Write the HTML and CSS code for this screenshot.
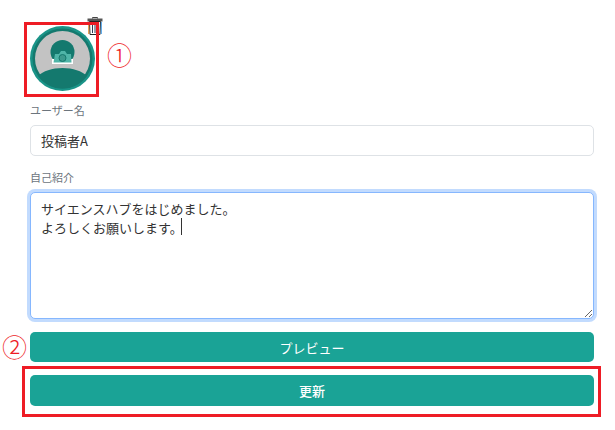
FILE: index.html
```html
<!DOCTYPE html>
<html lang="ja">
<head>
    <meta charset="UTF-8">
    <title>プロフィール編集</title>
    <link rel="stylesheet" href="styles.css">
</head>
<body>
    <form class="profile-form">
        <div class="avatar-wrap">
            <svg class="avatar" viewBox="0 0 65 65" width="65" height="65">
                <circle cx="32.5" cy="32.5" r="32.5" fill="#1a9488"/>
                <circle cx="32.5" cy="32.5" r="30" fill="#14796e"/>
                <circle cx="32.5" cy="32.5" r="27.500" fill="#c3c3c3"/>
                <path d="M8 50C13 45 22 42 32.500 42S52 45 57 50A30 30 0 0 1 32.500 62.500 30 30 0 0 1 8 50Z" fill="#14796e"/>
                <circle cx="32.5" cy="26" r="12" fill="#14796e"/>
                <path d="M22 33H43V38H22Z" fill="#fff"/>
                <path d="M23.500 36.500L25 28H29L31 25H35L37 28H41L41.500 36.500Z" fill="#4fb5a8"/>
                <circle cx="32.500" cy="32" r="3.500" fill="#3d9a8e" stroke="#14796e"/>
            </svg>
            <svg class="trash-icon" viewBox="0 0 16 18" width="16" height="18">
                <path d="M5.500 1.500V0.500H10.500V1.500" fill="none" stroke="#444"/>
                <path d="M0.500 1.500H15.500V4.500H0.500Z" fill="#555"/>
                <path d="M2.500 4.500H13.500L13 17.500H3Z" fill="#fff" stroke="#222"/>
                <path d="M1.700 5V17" stroke="#e8912d"/>
                <path d="M14.300 5V17" stroke="#3f9be8"/>
                <path d="M5.500 6V16M8 6V16M10.500 6V16" stroke="#2b3a55"/>
            </svg>
            <span class="mark mark-one">①</span>
            <div class="red-box red-box-avatar"></div>
        </div>

        <label class="field-label name-label" for="name">ユーザー名</label>
        <input class="text-input" id="name" type="text" value="投稿者A">

        <label class="field-label bio-label" for="bio">自己紹介</label>
        <div class="bio-wrap">
            <textarea class="bio-input" id="bio">サイエンスハブをはじめました。
よろしくお願いします。</textarea>
            <span class="caret"></span>
        </div>

        <div class="preview-row">
            <span class="mark mark-two">②</span>
            <button class="btn btn-preview" type="button">プレビュー</button>
        </div>
        <div class="submit-row">
            <button class="btn btn-submit" type="button">更新</button>
            <div class="red-box red-box-submit"></div>
        </div>
    </form>
</body>
</html>
```

FILE: styles.css
```css
body {
    margin: 0;
    background: #fff;
    font-family: "Noto Sans CJK JP", "Noto Sans", sans-serif;
    color: #333;
}
.profile-form {
    display: flex;
    flex-direction: column;
    padding: 26px 21px 24px 30px;
}
.avatar-wrap {
    position: relative;
    width: 65px;
    height: 65px;
}
.avatar {
    display: block;
}
.trash-icon {
    position: absolute;
    left: 57px;
    top: -9px;
}
.mark {
    position: absolute;
    color: #ee1c25;
    font-size: 25px;
    font-weight: 300;
    line-height: 26px;
}
.mark-one {
    left: 77px;
    top: 15px;
}
.mark-two {
    left: -28px;
    top: 1px;
}
.red-box {
    position: absolute;
    border: 3px solid #ee1c25;
    box-sizing: border-box;
    pointer-events: none;
}
.red-box-avatar {
    left: -6px;
    top: -4px;
    width: 75px;
    height: 75px;
}
.red-box-submit {
    left: -8px;
    top: -9px;
    width: 579px;
    height: 51px;
}
.field-label {
    font-size: 11px;
    line-height: 18px;
    color: #6c757d;
}
.name-label {
    margin-top: 10px;
    margin-bottom: 6px;
}
.bio-label {
    margin-top: 12px;
    margin-bottom: 6px;
}
.text-input {
    height: 31px;
    box-sizing: border-box;
    padding: 0 10px;
    border: 1px solid #dee2e6;
    border-radius: 5px;
    font: inherit;
    font-size: 13px;
    color: #333;
}
.bio-wrap {
    position: relative;
    height: 127px;
}
.bio-input {
    display: block;
    width: 100%;
    height: 100%;
    box-sizing: border-box;
    padding: 6px 10px;
    border: 1px solid #86b7fe;
    border-radius: 5px;
    box-shadow: 0 0 0 3px #c2dbfe;
    outline: none;
    font: inherit;
    font-size: 13px;
    line-height: 19px;
    color: #333;
}
.caret {
    position: absolute;
    left: 151px;
    top: 26px;
    width: 1px;
    height: 17px;
    background: #333;
}
.preview-row {
    position: relative;
    margin-top: 13px;
}
.submit-row {
    position: relative;
    margin-top: 13px;
}
.btn {
    display: block;
    width: 100%;
    border: none;
    border-radius: 5px;
    background: #1aa396;
    color: #fff;
    font: inherit;
}
.btn-preview {
    height: 30px;
    font-size: 13px;
}
.btn-submit {
    height: 31px;
    font-size: 13px;
    font-weight: 500;
}
```
